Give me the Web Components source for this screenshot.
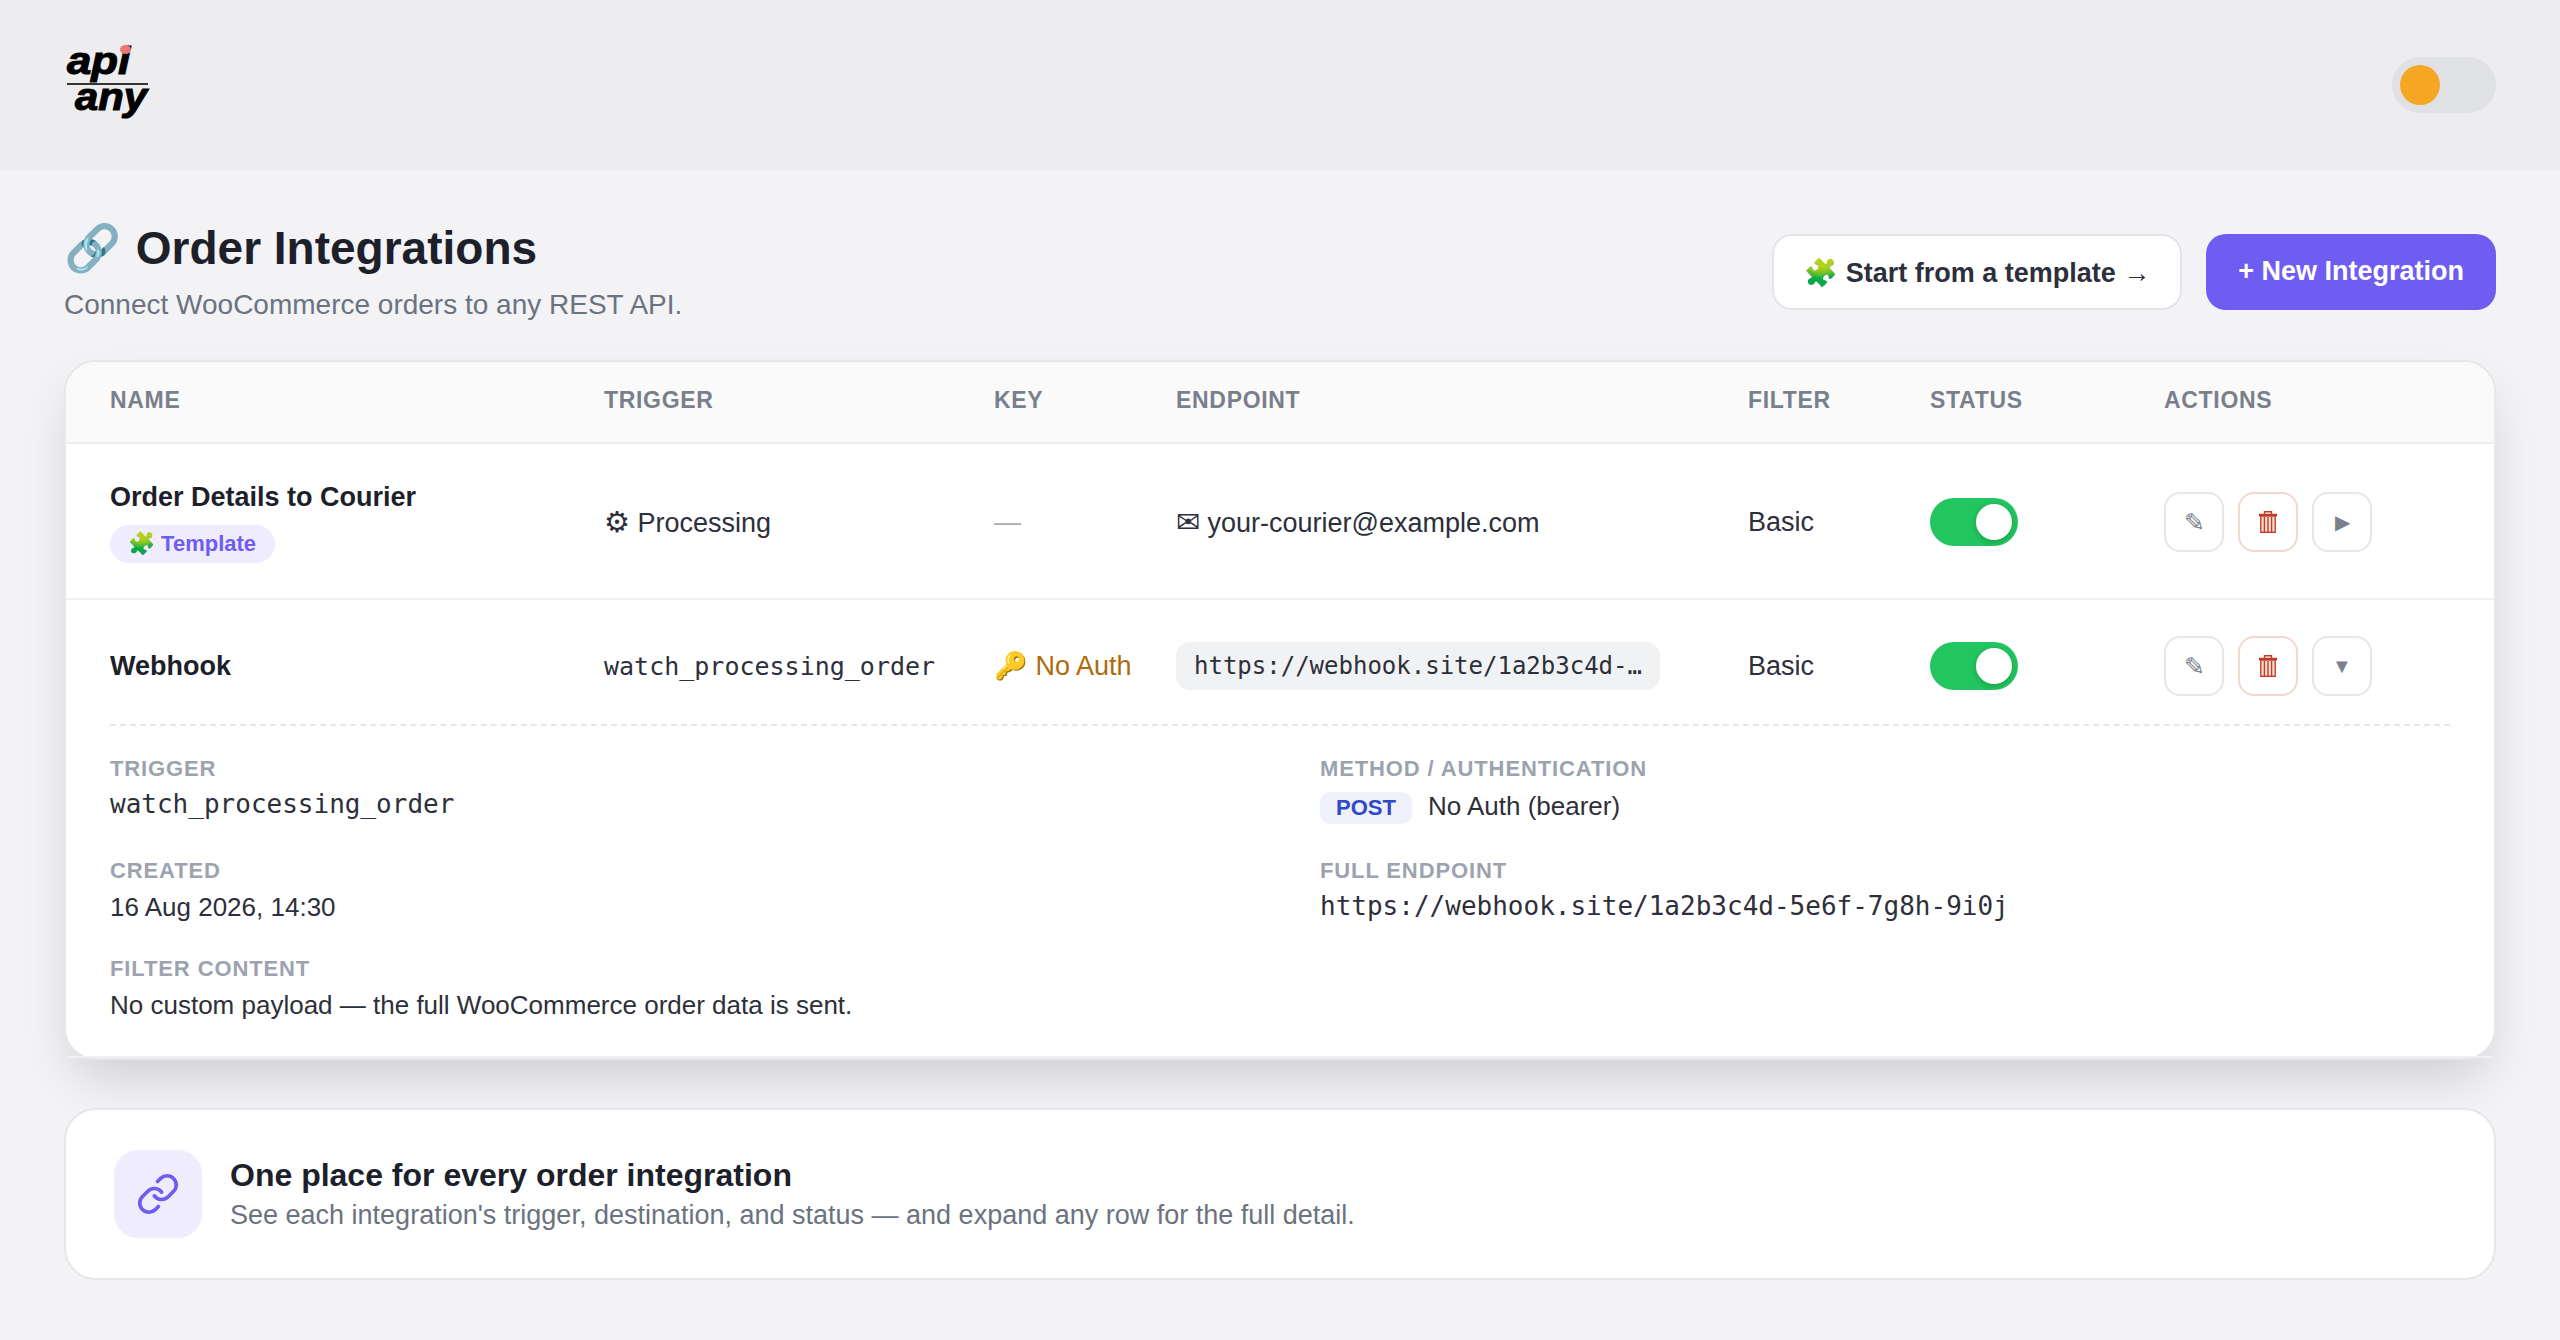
<!DOCTYPE html>
<html lang="en">
<head>
<meta charset="utf-8">
<title>Order Integrations</title>
<style>
    html, body {
        margin: 0;
        background-color: #f3f3f6;
        font-family: "Liberation Sans", Arial, sans-serif;
        color: #1d1f2b;
    }

    .glyph {
        font-size: 29px;
    }
</style>
</head>
<body>
<app-header></app-header>
<page-main>
    <page-head slot="head"></page-head>

    <integration-table>
        <integration-row divided>
            <div slot="name">
                <div>Order Details to Courier</div>
                <template-badge></template-badge>
            </div>
            <span slot="trigger" class="plain"><span class="glyph">⚙</span> Processing</span>
            <span slot="key" class="none">—</span>
            <span slot="endpoint" class="plain"><span class="glyph">✉</span> your-courier@example.com</span>
            <span slot="filter" class="plain">Basic</span>
            <status-switch slot="status"></status-switch>
            <row-actions slot="actions" arrow="▶"></row-actions>
        </integration-row>

        <integration-row divided>
            <div slot="name">Webhook</div>
            <span slot="trigger" class="mono">watch_processing_order</span>
            <span slot="key" class="auth">🔑 No Auth</span>
            <endpoint-chip slot="endpoint">https://webhook.site/1a2b3c4d-…</endpoint-chip>
            <span slot="filter" class="plain">Basic</span>
            <status-switch slot="status"></status-switch>
            <row-actions slot="actions" arrow="▼"></row-actions>

            <integration-details slot="details">
                <detail-field label="Trigger"><span class="mono-lg">watch_processing_order</span></detail-field>
                <detail-field label="Method / Authentication"><method-chip>POST</method-chip><span class="auth-text">No Auth (bearer)</span></detail-field>
                <detail-field label="Created">16 Aug 2026, 14:30</detail-field>
                <detail-field label="Full endpoint"><span class="mono-lg">https://webhook.site/1a2b3c4d-5e6f-7g8h-9i0j</span></detail-field>
                <detail-field label="Filter content" wide>No custom payload — the full WooCommerce order data is sent.</detail-field>
            </integration-details>
        </integration-row>
    </integration-table>

    <info-card slot="foot"></info-card>
</page-main>

<script>
const sansStack = '"Liberation Sans", Arial, sans-serif';
const monoStack = '"DejaVu Sans Mono", monospace';
const accent = '#6f5cf1';

class AppHeader extends HTMLElement {
    constructor() {
        super();
        this.attachShadow({mode: 'open'});
        this.shadowRoot.innerHTML = `
            <style>
                :host {
                    display: flex;
                    justify-content: space-between;
                    align-items: center;
                    height: 170px;
                    padding: 0 64px;
                    background-color: #ededf0;
                }
            </style>
            <brand-logo></brand-logo>
            <theme-toggle></theme-toggle>
        `;
    }
}

class BrandLogo extends HTMLElement {
    constructor() {
        super();
        this.attachShadow({mode: 'open'});
        this.shadowRoot.innerHTML = `
            <style>
                :host {
                    display: block;
                    position: relative;
                    width: 81px;
                    margin: 0 0 13px 3px;
                    font: italic 700 38px/38px ${sansStack};
                    color: #000;
                    -webkit-text-stroke: 1.1px #000;
                }
                .word { display: block; height: 38px; transform-origin: left center; transform: scaleX(1.15); }
                .api { margin-bottom: 3px; }
                .any { margin: -7px 0 0 8px; transform: scaleX(1.1); }
                .rule { height: 2px; background-color: #333; }
                .dot {
                    position: absolute;
                    left: 53px;
                    top: 3px;
                    width: 11px;
                    height: 9px;
                    border-radius: 50%;
                    background-color: #ee7672;
                }
            </style>
            <span class="word api">api</span>
            <div class="rule"></div>
            <span class="word any">any</span>
            <span class="dot"></span>
        `;
    }
}

class ThemeToggle extends HTMLElement {
    constructor() {
        super();
        this.attachShadow({mode: 'open'});
        this.shadowRoot.innerHTML = `
            <style>
                :host {
                    display: flex;
                    align-items: center;
                    box-sizing: border-box;
                    width: 104px;
                    height: 56px;
                    padding: 0 8px;
                    border-radius: 28px;
                    background-color: #e0e1e5;
                }
                div { width: 40px; height: 40px; border-radius: 50%; background-color: #f5a623; }
            </style>
            <div></div>
        `;
    }
}

class PageMain extends HTMLElement {
    constructor() {
        super();
        this.attachShadow({mode: 'open'});
        this.shadowRoot.innerHTML = `
            <style>
                :host { display: block; padding: 50px 64px 52px; }
                .foot { margin-top: 48px; }
            </style>
            <slot name="head"></slot>
            <slot></slot>
            <div class="foot"><slot name="foot"></slot></div>
        `;
    }
}

class PageHead extends HTMLElement {
    constructor() {
        super();
        this.attachShadow({mode: 'open'});
        this.shadowRoot.innerHTML = `
            <style>
                :host {
                    display: flex;
                    justify-content: space-between;
                    align-items: center;
                    margin-bottom: 35px;
                }
                h1 {
                    margin: 0 0 9px;
                    font-size: 46px;
                    line-height: 56px;
                    font-weight: 700;
                    color: #1d1f2b;
                }
                h1 span { margin-right: 2px; }
                p { margin: 0; font-size: 28px; line-height: 40px; color: #6b7280; }
                .buttons { display: flex; gap: 24px; margin-bottom: 2px; }
                .btn {
                    display: flex;
                    align-items: center;
                    box-sizing: border-box;
                    height: 76px;
                    border-radius: 20px;
                    font-size: 27px;
                    font-weight: 700;
                }
                .ghost {
                    padding: 2px 30px 0;
                    background-color: #fff;
                    border: 2px solid #e4e4e9;
                    color: #2d2f3a;
                }
                .primary { padding: 0 32px 1px; background-color: ${accent}; color: #fff; }
            </style>
            <div>
                <h1><span>🔗</span> Order Integrations</h1>
                <p>Connect WooCommerce orders to any REST API.</p>
            </div>
            <div class="buttons">
                <div class="btn ghost">🧩 Start from a template →</div>
                <div class="btn primary">+ New Integration</div>
            </div>
        `;
    }
}

const rowColumns = '494px 390px 182px 572px 182px 234px 1fr';

class IntegrationTable extends HTMLElement {
    constructor() {
        super();
        this.attachShadow({mode: 'open'});
        this.shadowRoot.innerHTML = `
            <style>
                :host {
                    display: block;
                    background-color: #fff;
                    border: 2px solid #e6e6eb;
                    border-radius: 32px;
                    box-shadow: 0 24px 50px -12px rgba(30, 30, 50, 0.2);
                }
                .head {
                    display: grid;
                    grid-template-columns: ${rowColumns};
                    align-items: center;
                    box-sizing: border-box;
                    height: 82px;
                    padding: 0 44px 3px;
                    border-radius: 30px 30px 0 0;
                    background-color: #fafafb;
                    border-bottom: 2px solid #eeeef1;
                    font-size: 23px;
                    font-weight: 700;
                    letter-spacing: 0.03em;
                    color: #7a7f8c;
                }
            </style>
            <div class="head">
                <span>NAME</span><span>TRIGGER</span><span>KEY</span><span>ENDPOINT</span><span>FILTER</span><span>STATUS</span><span>ACTIONS</span>
            </div>
            <slot></slot>
        `;
    }
}

class IntegrationRow extends HTMLElement {
    constructor() {
        super();
        this.attachShadow({mode: 'open'});
        this.shadowRoot.innerHTML = `
            <style>
                :host { display: block; border-bottom: 2px solid #f0f0f3; }
                .cells {
                    display: grid;
                    grid-template-columns: ${rowColumns};
                    align-items: center;
                    min-height: 152px;
                    padding: 2px 44px 0;
                }
                .cells.compact { min-height: 0; padding: 36px 44px 28px; }
                ::slotted([slot="name"]) { font-size: 27px; font-weight: 700; color: #1d1f2b; }
                ::slotted(.plain) { font-size: 27px; color: #2d2f3a; }
                ::slotted(.none) { font-size: 27px; color: #a6abb6; }
                ::slotted(.auth) { font-size: 27px; color: #b06a0a; }
                ::slotted(.mono) { font: 25px ${monoStack}; color: #2d2f3a; }
            </style>
            <div class="cells">
                <slot name="name"></slot>
                <slot name="trigger"></slot>
                <slot name="key"></slot>
                <slot name="endpoint"></slot>
                <slot name="filter"></slot>
                <slot name="status"></slot>
                <slot name="actions"></slot>
            </div>
            <slot name="details"></slot>
        `;
    }

    connectedCallback() {
        if (this.querySelector('integration-details')) {
            this.shadowRoot.querySelector('.cells').classList.add('compact');
        }
    }
}

class TemplateBadge extends HTMLElement {
    constructor() {
        super();
        this.attachShadow({mode: 'open'});
        this.shadowRoot.innerHTML = `
            <style>
                :host {
                    display: flex;
                    align-items: center;
                    width: fit-content;
                    height: 38px;
                    margin-top: 12px;
                    padding: 0 19px 0 18px;
                    border-radius: 19px;
                    background-color: #efedfd;
                    color: ${accent};
                    font-size: 22px;
                    font-weight: 700;
                }
            </style>
            <span>🧩 Template</span>
        `;
    }
}

class EndpointChip extends HTMLElement {
    constructor() {
        super();
        this.attachShadow({mode: 'open'});
        this.shadowRoot.innerHTML = `
            <style>
                :host {
                    display: block;
                    box-sizing: border-box;
                    width: 484px;
                    height: 48px;
                    padding: 0 18px;
                    border-radius: 14px;
                    background-color: #f1f2f4;
                    font: 24px/48px ${monoStack};
                    color: #2d2f3a;
                    white-space: nowrap;
                }
            </style>
            <slot></slot>
        `;
    }
}

class StatusSwitch extends HTMLElement {
    constructor() {
        super();
        this.attachShadow({mode: 'open'});
        this.shadowRoot.innerHTML = `
            <style>
                :host {
                    display: flex;
                    justify-content: flex-end;
                    align-items: center;
                    box-sizing: border-box;
                    width: 88px;
                    height: 48px;
                    padding-right: 6px;
                    border-radius: 24px;
                    background-color: #22c55e;
                }
                div {
                    width: 36px;
                    height: 36px;
                    border-radius: 50%;
                    background-color: #fff;
                    box-shadow: 0 2px 6px rgba(0, 0, 0, 0.2);
                }
            </style>
            <div></div>
        `;
    }
}

class RowActions extends HTMLElement {
    constructor() {
        super();
        this.attachShadow({mode: 'open'});
        this.shadowRoot.innerHTML = `
            <style>
                :host { display: flex; gap: 14px; }
                span {
                    display: flex;
                    justify-content: center;
                    align-items: center;
                    box-sizing: border-box;
                    width: 60px;
                    height: 60px;
                    border: 2px solid #e6e6eb;
                    border-radius: 16px;
                    background-color: #fff;
                    font-size: 25px;
                    color: #7a7f8c;
                }
                .danger { border-color: #f4d6d1; }
                .arrow { font-size: 20px; }
            </style>
            <span>✎</span>
            <span class="danger">
                <svg width="18" height="22" viewBox="0 0 18 22" fill="none" stroke="#c8372b" stroke-width="1.4">
                    <path d="M5.5 3V.8h7V3"/>
                    <path d="M0 4h18" stroke-width="2.4"/>
                    <rect x="1.8" y="5" width="14.4" height="16.3" fill="#f8e3d2"/>
                    <path d="M5.4 6v15M9 6v15M12.6 6v15"/>
                </svg>
            </span>
            <span class="arrow">${this.getAttribute('arrow')}</span>
        `;
    }
}

class IntegrationDetails extends HTMLElement {
    constructor() {
        super();
        this.attachShadow({mode: 'open'});
        this.shadowRoot.innerHTML = `
            <style>
                :host { display: block; padding: 0 44px 33px; }
                .grid {
                    display: grid;
                    grid-template-columns: 1fr 1fr;
                    column-gap: 80px;
                    row-gap: 30px;
                    padding-top: 29px;
                    border-top: 2px dashed #e6e6eb;
                }
            </style>
            <div class="grid"><slot></slot></div>
        `;
    }
}

class DetailField extends HTMLElement {
    constructor() {
        super();
        this.attachShadow({mode: 'open'});
        this.shadowRoot.innerHTML = `
            <style>
                :host { display: block; font-size: 26px; color: #2d2f3a; }
                :host([wide]) { grid-column: 1 / -1; }
                .label {
                    font-size: 22px;
                    line-height: 28px;
                    font-weight: 700;
                    letter-spacing: 0.04em;
                    text-transform: uppercase;
                    color: #9ca3af;
                }
                .value { display: flex; align-items: center; gap: 16px; min-height: 36px; line-height: 36px; margin-top: 4px; }
                ::slotted(.mono-lg) { font: 26px ${monoStack}; margin-bottom: 3px; }
                ::slotted(.auth-text) { margin-bottom: 2px; }
            </style>
            <div class="label">${this.getAttribute('label')}</div>
            <div class="value"><slot></slot></div>
        `;
    }
}

class MethodChip extends HTMLElement {
    constructor() {
        super();
        this.attachShadow({mode: 'open'});
        this.shadowRoot.innerHTML = `
            <style>
                :host {
                    display: inline-block;
                    margin: 5px 0 3px;
                    padding: 0 16px;
                    height: 32px;
                    border-radius: 10px;
                    background-color: #eef0fb;
                    color: #2f49c8;
                    font-size: 22px;
                    line-height: 32px;
                    font-weight: 700;
                }
            </style>
            <slot></slot>
        `;
    }
}

class InfoCard extends HTMLElement {
    constructor() {
        super();
        this.attachShadow({mode: 'open'});
        this.shadowRoot.innerHTML = `
            <style>
                :host {
                    display: flex;
                    align-items: center;
                    gap: 28px;
                    height: 172px;
                    box-sizing: border-box;
                    padding: 0 48px;
                    background-color: #fff;
                    border: 2px solid #e6e6eb;
                    border-radius: 32px;
                }
                .icon {
                    display: flex;
                    justify-content: center;
                    align-items: center;
                    width: 88px;
                    height: 88px;
                    border-radius: 24px;
                    background-color: #efedfd;
                }
                h2 { margin: 0; font-size: 32px; line-height: 40px; color: #1d1f2b; }
                p { margin: 2px 0 0; font-size: 27px; line-height: 36px; color: #6b7280; }
            </style>
            <div class="icon">
                <svg width="44" height="44" viewBox="0 0 24 24" fill="none" stroke="${accent}" stroke-width="2" stroke-linecap="round" stroke-linejoin="round">
                    <path d="M10 13a5 5 0 0 0 7.54.54l3-3a5 5 0 0 0-7.07-7.07l-1.72 1.71"/>
                    <path d="M14 11a5 5 0 0 0-7.54-.54l-3 3a5 5 0 0 0 7.07 7.07l1.71-1.71"/>
                </svg>
            </div>
            <div>
                <h2>One place for every order integration</h2>
                <p>See each integration's trigger, destination, and status — and expand any row for the full detail.</p>
            </div>
        `;
    }
}

customElements.define('app-header', AppHeader);
customElements.define('brand-logo', BrandLogo);
customElements.define('theme-toggle', ThemeToggle);
customElements.define('page-main', PageMain);
customElements.define('page-head', PageHead);
customElements.define('integration-table', IntegrationTable);
customElements.define('integration-row', IntegrationRow);
customElements.define('template-badge', TemplateBadge);
customElements.define('endpoint-chip', EndpointChip);
customElements.define('status-switch', StatusSwitch);
customElements.define('row-actions', RowActions);
customElements.define('integration-details', IntegrationDetails);
customElements.define('detail-field', DetailField);
customElements.define('method-chip', MethodChip);
customElements.define('info-card', InfoCard);
</script>
</body>
</html>
